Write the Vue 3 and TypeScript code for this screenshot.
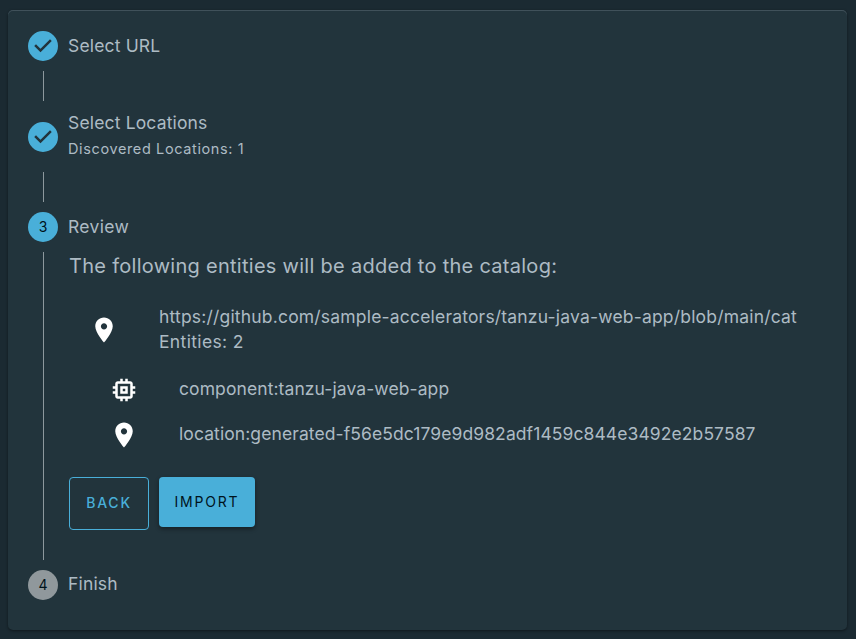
<script setup lang="ts">
interface Entity {
  name: string
  kind: 'component' | 'location'
}

const icons = {
  location:
    'M12 2C8.13 2 5 5.13 5 9c0 5.25 7 13 7 13s7-7.75 7-13c0-3.87-3.13-7-7-7zm0 9.5c-1.38 0-2.500-1.120-2.500-2.500s1.120-2.500 2.500-2.500 2.500 1.120 2.500 2.500-1.120 2.500-2.500 2.500z',
  component:
    'M15 9H9v6h6V9zm-2 4h-2v-2h2v2zm8-2V9h-2V7c0-1.100-.9-2-2-2h-2V3h-2v2h-2V3H9v2H7c-1.100 0-2 .9-2 2v2H3v2h2v2H3v2h2v2c0 1.100.9 2 2 2h2v2h2v-2h2v2h2v-2h2c1.100 0 2-.9 2-2v-2h2v-2h-2v-2h2zm-4 6H7V7h10v10z',
}
const checkPath =
  'M12 0a12 12 0 1 0 0 24 12 12 0 0 0 0-24zm-2 17l-5-5 1.400-1.400 3.600 3.600 7.600-7.600L19 8l-9 9z'

const entities: Entity[] = [
  { kind: 'component', name: 'component:tanzu-java-web-app' },
  { kind: 'location', name: 'location:generated-f56e5dc179e9d982adf1459c844e3492e2b57587' },
]
</script>

<template>
  <main class="panel">
    <div class="step">
      <svg class="check" viewBox="0 0 24 24"><path :d="checkPath" /></svg>
      <span class="label">Select URL</span>
    </div>
    <div class="connector"></div>
    <div class="step tall">
      <svg class="check" viewBox="0 0 24 24"><path :d="checkPath" /></svg>
      <div class="labels">
        <span class="label">Select Locations</span>
        <span class="caption">Discovered Locations: 1</span>
      </div>
    </div>
    <div class="connector"></div>
    <div class="step">
      <span class="badge">3</span>
      <span class="label review">Review</span>
    </div>
    <section class="content">
      <h2>The following entities will be added to the catalog:</h2>
      <div class="source">
        <svg class="icon" viewBox="0 0 24 24"><path :d="icons.location" /></svg>
        <div class="source-text">
          <div class="link">https://github.com/sample-accelerators/tanzu-java-web-app/blob/main/cat</div>
          <div class="count">Entities: 2</div>
        </div>
      </div>
      <ul>
        <li v-for="entity in entities" :key="entity.name">
          <svg class="icon" viewBox="0 0 24 24"><path :d="icons[entity.kind]" /></svg>
          <span class="entity-name">{{ entity.name }}</span>
        </li>
      </ul>
      <div class="actions">
        <button class="back">BACK</button>
        <button class="import">IMPORT</button>
      </div>
    </section>
    <div class="step">
      <span class="badge idle">4</span>
      <span class="label finish">Finish</span>
    </div>
  </main>
</template>

<style>
body {
  background: #1b2a32;
}
</style>

<style scoped>
.panel {
  box-sizing: border-box;
  width: 839px;
  height: 620px;
  margin: 10px 0 9px 8px;
  padding: 21px 20px 30px;
  border-radius: 5px;
  background: #22343c;
  box-shadow: inset 0 1px 0 #40515a, 0 1px 3px rgba(0, 0, 0, 0.45);
  color: #adbbc4;
  font-family: Inter, "Liberation Sans", sans-serif;
  font-size: 17.5px;
  line-height: 25px;
}
.step {
  display: flex;
  align-items: center;
  gap: 10px;
  height: 30px;
}
.tall {
  height: 51px;
}
.check {
  width: 30px;
  height: 30px;
  fill: #49afd9;
}
.labels {
  display: flex;
  flex-direction: column;
}
.label {
  padding-bottom: 2px;
  letter-spacing: 0.16px;
  white-space: nowrap;
}
.labels .label {
  line-height: 23px;
}
.review {
  letter-spacing: 0.35px;
}
.finish {
  padding-bottom: 4px;
}
.caption {
  font-size: 14.5px;
  line-height: 26px;
  letter-spacing: 0.62px;
}
.connector {
  width: 1px;
  height: 30px;
  margin: 10px 0 10px 15px;
  background: #8d989d;
}
.badge {
  width: 30px;
  height: 30px;
  border-radius: 50%;
  background: #49afd9;
  color: #00131c;
  font-size: 14px;
  line-height: 30px;
  text-align: center;
}
.idle {
  background: #90989c;
}
.content {
  box-sizing: border-box;
  height: 308px;
  margin: 10px 0 10px 15px;
  padding-left: 25px;
  border-left: 1px solid #8d989d;
}
h2 {
  margin: 0;
  font-size: 20px;
  font-weight: 400;
  line-height: 28px;
  letter-spacing: 0.28px;
}
.source {
  display: flex;
  align-items: center;
  height: 50px;
  margin-top: 24px;
  padding-left: 20px;
}
.icon {
  flex: none;
  width: 30px;
  height: 30px;
  fill: #fff;
}
.source .icon {
  margin-top: 1px;
}
.source-text {
  margin-left: 40px;
  white-space: nowrap;
}
.link {
  letter-spacing: 0.19px;
}
.count {
  letter-spacing: 0.35px;
}
ul {
  margin: 13px 0 0;
  padding: 0 0 0 40px;
  list-style: none;
}
li {
  display: flex;
  align-items: center;
  gap: 40px;
  height: 45px;
  white-space: nowrap;
}
.entity-name {
  padding-bottom: 2px;
  letter-spacing: 0.09px;
}
.actions {
  display: flex;
  align-items: flex-start;
  gap: 10px;
  margin-top: 20px;
}
button {
  box-sizing: border-box;
  padding: 0;
  border-radius: 4px;
  font: 500 14px/20px Inter, "Liberation Sans", sans-serif;
  letter-spacing: 1.8px;
}
.back {
  width: 80px;
  height: 53px;
  padding-bottom: 2px;
  border: 1px solid #49afd9;
  background: transparent;
  color: #49afd9;
}
.import {
  width: 96px;
  height: 50px;
  border: 0;
  background: #49afd9;
  color: #00131c;
  font-weight: 400;
  box-shadow: 0 2px 4px rgba(0, 0, 0, 0.4);
}
</style>
